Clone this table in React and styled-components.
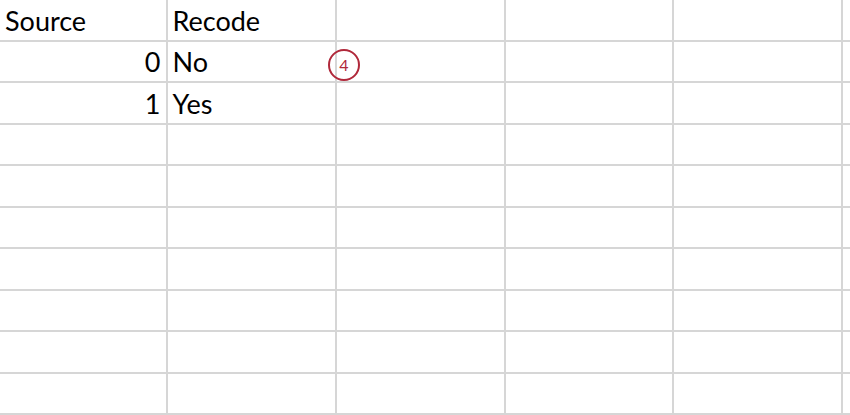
import styled, { createGlobalStyle } from 'styled-components';

const GlobalStyle = createGlobalStyle`
  html, body {
    margin: 0;
    padding: 0;
    background: #ffffff;
  }
  body {
    width: 850px;
    height: 415px;
    overflow: hidden;
    font-family: Lato, "Open Sans", sans-serif;
  }
`;

const rows = [
  ['Source', 'Recode'],
  ['0', 'No'],
  ['1', 'Yes'],
  ['', ''],
  ['', ''],
  ['', ''],
  ['', ''],
  ['', ''],
  ['', ''],
  ['', ''],
];

function App() {
  return (
    <>
      <GlobalStyle />
      <Sheet>
        {rows.map((row, r) => (
          [0, 1, 2, 3, 4, 5].map((c) => {
            const value = row[c] || '';
            const numeric = value !== '' && !isNaN(Number(value));
            return (
              <Cell key={`${r}-${c}`} $numeric={numeric}>
                {value}
                {r === 1 && c === 2 && <Callout>4</Callout>}
              </Cell>
            );
          })
        ))}
      </Sheet>
    </>
  );
}

export default App;

const Sheet = styled.div`
  display: grid;
  grid-template-columns: 165.5px 167px 167px 166.5px 166.5px 1fr;
  grid-auto-rows: 39.5px;
  gap: 2px;
  background: #d6d6d6;
  width: 850px;
  height: 415px;
  overflow: hidden;
`;

const Cell = styled.div`
  position: relative;
  background: #ffffff;
  display: flex;
  align-items: center;
  justify-content: ${(p) => (p.$numeric ? 'flex-end' : 'flex-start')};
  padding: 1px 5px 0 5px;
  font-size: 27px;
  color: #000000;
  white-space: nowrap;
`;

const Callout = styled.span`
  position: absolute;
  left: -8.5px;
  top: 7px;
  width: 28px;
  height: 28px;
  border: 2.5px solid #b0283a;
  border-radius: 50%;
  display: flex;
  align-items: center;
  justify-content: center;
  font-size: 16px;
  color: #b0283a;
`;
